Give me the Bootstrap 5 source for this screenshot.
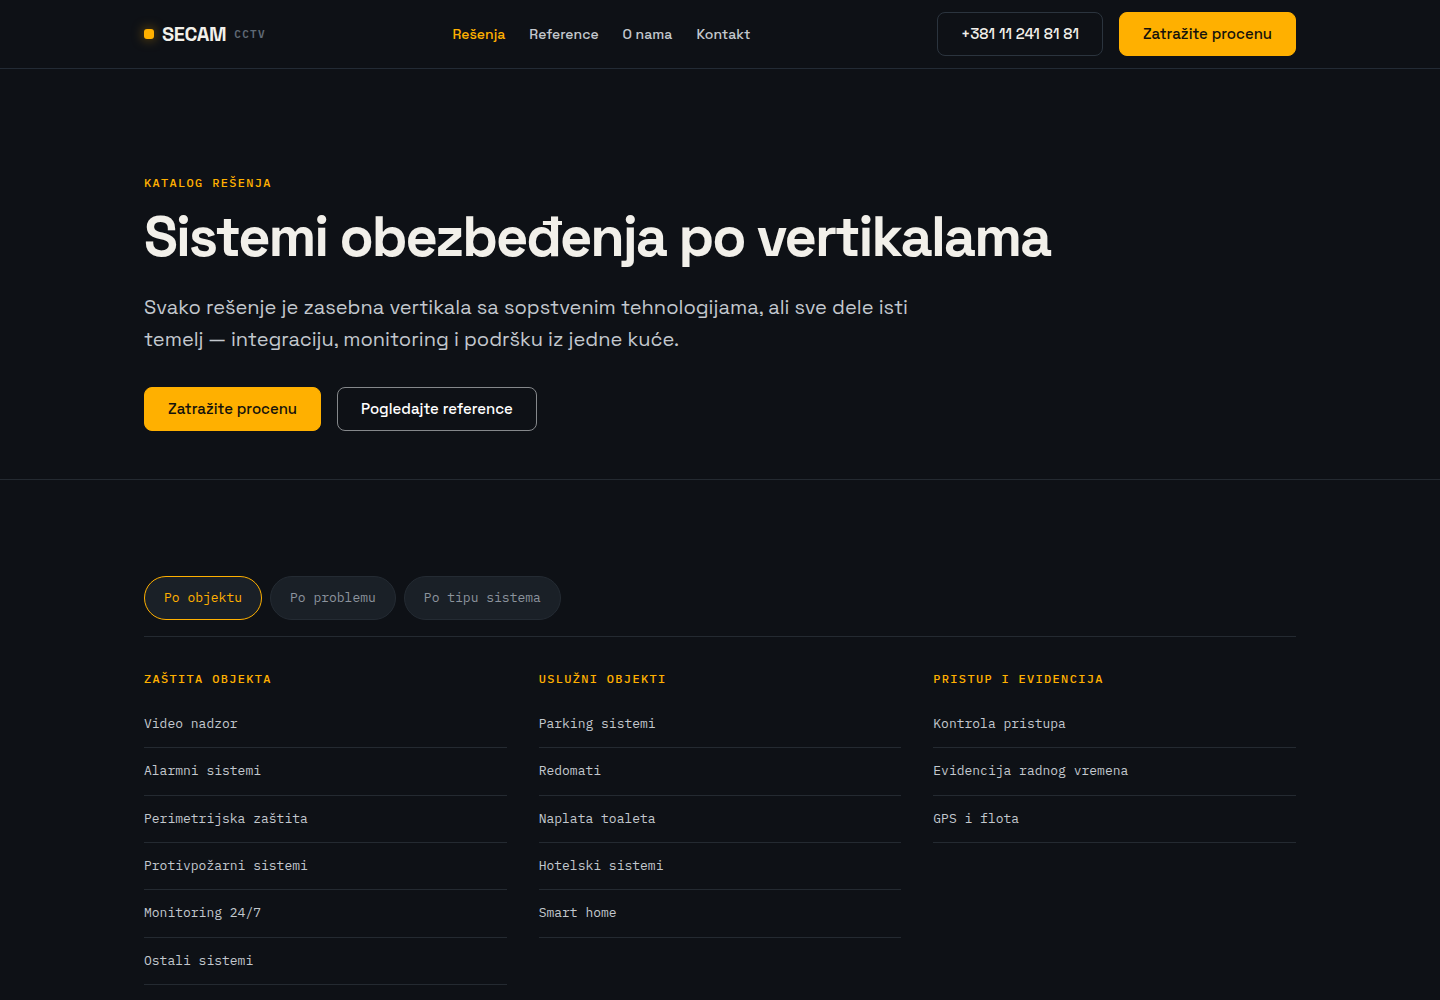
<!DOCTYPE html>
<html lang="sr-Latn">
<head>
<meta charset="utf-8">
<meta name="viewport" content="width=device-width, initial-scale=1">
<title>SECAM CCTV – Katalog rešenja</title>
<link href="https://cdn.jsdelivr.net/npm/bootstrap@5.3.0/dist/css/bootstrap.min.css" rel="stylesheet">
<style>
:root {
  --ink: #0e1116;
  --panel: #1a2027;
  --rule: #242a31;
  --amber: #ffb000;
  --paper: #f2f0ea;
  --soft: #c3c8ce;
  --mono: "IBM Plex Mono", "Liberation Mono", monospace;
}
body { background: var(--ink); color: var(--paper); font-family: "Space Grotesk", Inter, sans-serif; font-size: 16px; line-height: 1.6; }
a { text-decoration: none; }
.wrap { max-width: 1200px; }
.site-bar { border-bottom: 1px solid #232b35; padding: 12px 0; }
.brand { color: var(--paper); gap: 8px; }
.brand-dot { width: 10px; height: 10px; border-radius: 3px; background: var(--amber); box-shadow: 0 0 12px rgba(255, 176, 0, .5); }
.brand-name { font-size: 20px; font-weight: 700; line-height: 24px; letter-spacing: -0.02em; }
.brand-tag { font-family: var(--mono); font-size: 11px; font-weight: 600; line-height: 22px; letter-spacing: 0.12em; color: #5f6975; }
.menu { gap: 24px; font-size: 14px; font-weight: 500; }
.menu .nav-link { color: var(--soft); padding: 0; }
.menu .nav-link.active { color: var(--amber); }
.cta { --bs-btn-padding-x: 23px; --bs-btn-padding-y: 9px; --bs-btn-font-size: 15px; --bs-btn-font-weight: 500; --bs-btn-line-height: 24px; --bs-btn-border-radius: 8px; }
.cta-main { --bs-btn-bg: var(--amber); --bs-btn-color: #14120c; --bs-btn-border-color: var(--amber); --bs-btn-hover-bg: #ffc02e; --bs-btn-hover-border-color: #ffc02e; }
.cta-phone { --bs-btn-color: var(--paper); --bs-btn-border-color: #2b343e; --bs-btn-hover-color: var(--amber); --bs-btn-hover-border-color: var(--amber); }
.cta-ghost { --bs-btn-color: #fff; --bs-btn-border-color: #85888b; --bs-btn-hover-color: #fff; --bs-btn-hover-border-color: #fff; }
.hero { padding: 104px 0 48px; border-bottom: 1px solid var(--rule); }
.eyebrow { font-family: var(--mono); font-size: 12px; font-weight: 500; line-height: 19px; letter-spacing: 0.11em; text-transform: uppercase; color: var(--amber); margin: 0; }
.hero-title { font-size: 56px; font-weight: 700; line-height: 62px; letter-spacing: -2px; margin: 14px 0 23px; }
.hero-text { font-size: 20px; line-height: 32px; color: var(--soft); max-width: 800px; margin-bottom: 32px; }
.catalog { padding: 96px 0; }
.filters { border-bottom: 1px solid var(--rule); padding-bottom: 16px; margin-bottom: 32px; }
.filter { --bs-btn-padding-x: 19px; --bs-btn-padding-y: 11px; --bs-btn-font-size: 13px; --bs-btn-line-height: 20px; --bs-btn-border-radius: 22px; --bs-btn-font-family: var(--mono); --bs-btn-bg: var(--panel); --bs-btn-color: #8c939d; --bs-btn-border-color: #242b33; --bs-btn-hover-color: var(--paper); --bs-btn-hover-border-color: #3a434d; --bs-btn-active-bg: var(--panel); --bs-btn-active-color: var(--amber); --bs-btn-active-border-color: var(--amber); }
.catalog-grid { --bs-gutter-x: 32px; --bs-gutter-y: 32px; }
.links { margin: 13px 0 0; font-family: var(--mono); font-size: 13px; line-height: 1.72; }
.links a { display: block; padding: 12px 0; border-bottom: 1px solid var(--rule); color: var(--soft); }
.links a:hover { color: var(--amber); }
</style>
<script src="https://cdn.jsdelivr.net/npm/bootstrap@5.3.0/dist/js/bootstrap.bundle.min.js" defer></script>
</head>
<body>
<header class="site-bar">
  <div class="container-fluid wrap px-4 d-flex flex-wrap align-items-center justify-content-between gap-3">
    <a class="brand d-flex align-items-center" href="#">
      <span class="brand-dot"></span>
      <span class="brand-name">SECAM</span>
      <span class="brand-tag">CCTV</span>
    </a>
    <nav class="menu nav" aria-label="Glavna navigacija">
      <a class="nav-link active" aria-current="page" href="#">Rešenja</a>
      <a class="nav-link" href="#">Reference</a>
      <a class="nav-link" href="#">O nama</a>
      <a class="nav-link" href="#">Kontakt</a>
    </nav>
    <div class="d-flex flex-wrap gap-3">
      <a class="btn cta cta-phone" href="tel:+381112418181">+381 11 241 81 81</a>
      <a class="btn cta cta-main" href="#">Zatražite procenu</a>
    </div>
  </div>
</header>
<main>
  <section class="hero">
    <div class="container-fluid wrap px-4">
      <p class="eyebrow">Katalog rešenja</p>
      <h1 class="hero-title">Sistemi obezbeđenja po vertikalama</h1>
      <p class="hero-text">Svako rešenje je zasebna vertikala sa sopstvenim tehnologijama, ali sve dele isti temelj — integraciju, monitoring i podršku iz jedne kuće.</p>
      <div class="d-flex flex-wrap gap-3">
        <a class="btn cta cta-main" href="#">Zatražite procenu</a>
        <a class="btn cta cta-ghost" href="#">Pogledajte reference</a>
      </div>
    </div>
  </section>
  <section class="catalog">
    <div class="container-fluid wrap px-4">
      <div class="filters d-flex flex-wrap gap-2">
        <button type="button" class="btn filter active" aria-pressed="true">Po objektu</button>
        <button type="button" class="btn filter" aria-pressed="false">Po problemu</button>
        <button type="button" class="btn filter" aria-pressed="false">Po tipu sistema</button>
      </div>
      <div class="catalog-grid row row-cols-1 row-cols-md-3">
        <div>
          <h2 class="eyebrow">Zaštita objekta</h2>
          <ul class="links list-unstyled">
            <li><a href="#">Video nadzor</a></li>
            <li><a href="#">Alarmni sistemi</a></li>
            <li><a href="#">Perimetrijska zaštita</a></li>
            <li><a href="#">Protivpožarni sistemi</a></li>
            <li><a href="#">Monitoring 24/7</a></li>
            <li><a href="#">Ostali sistemi</a></li>
          </ul>
        </div>
        <div>
          <h2 class="eyebrow">Uslužni objekti</h2>
          <ul class="links list-unstyled">
            <li><a href="#">Parking sistemi</a></li>
            <li><a href="#">Redomati</a></li>
            <li><a href="#">Naplata toaleta</a></li>
            <li><a href="#">Hotelski sistemi</a></li>
            <li><a href="#">Smart home</a></li>
          </ul>
        </div>
        <div>
          <h2 class="eyebrow">Pristup i evidencija</h2>
          <ul class="links list-unstyled">
            <li><a href="#">Kontrola pristupa</a></li>
            <li><a href="#">Evidencija radnog vremena</a></li>
            <li><a href="#">GPS i flota</a></li>
          </ul>
        </div>
      </div>
    </div>
  </section>
</main>
</body>
</html>
